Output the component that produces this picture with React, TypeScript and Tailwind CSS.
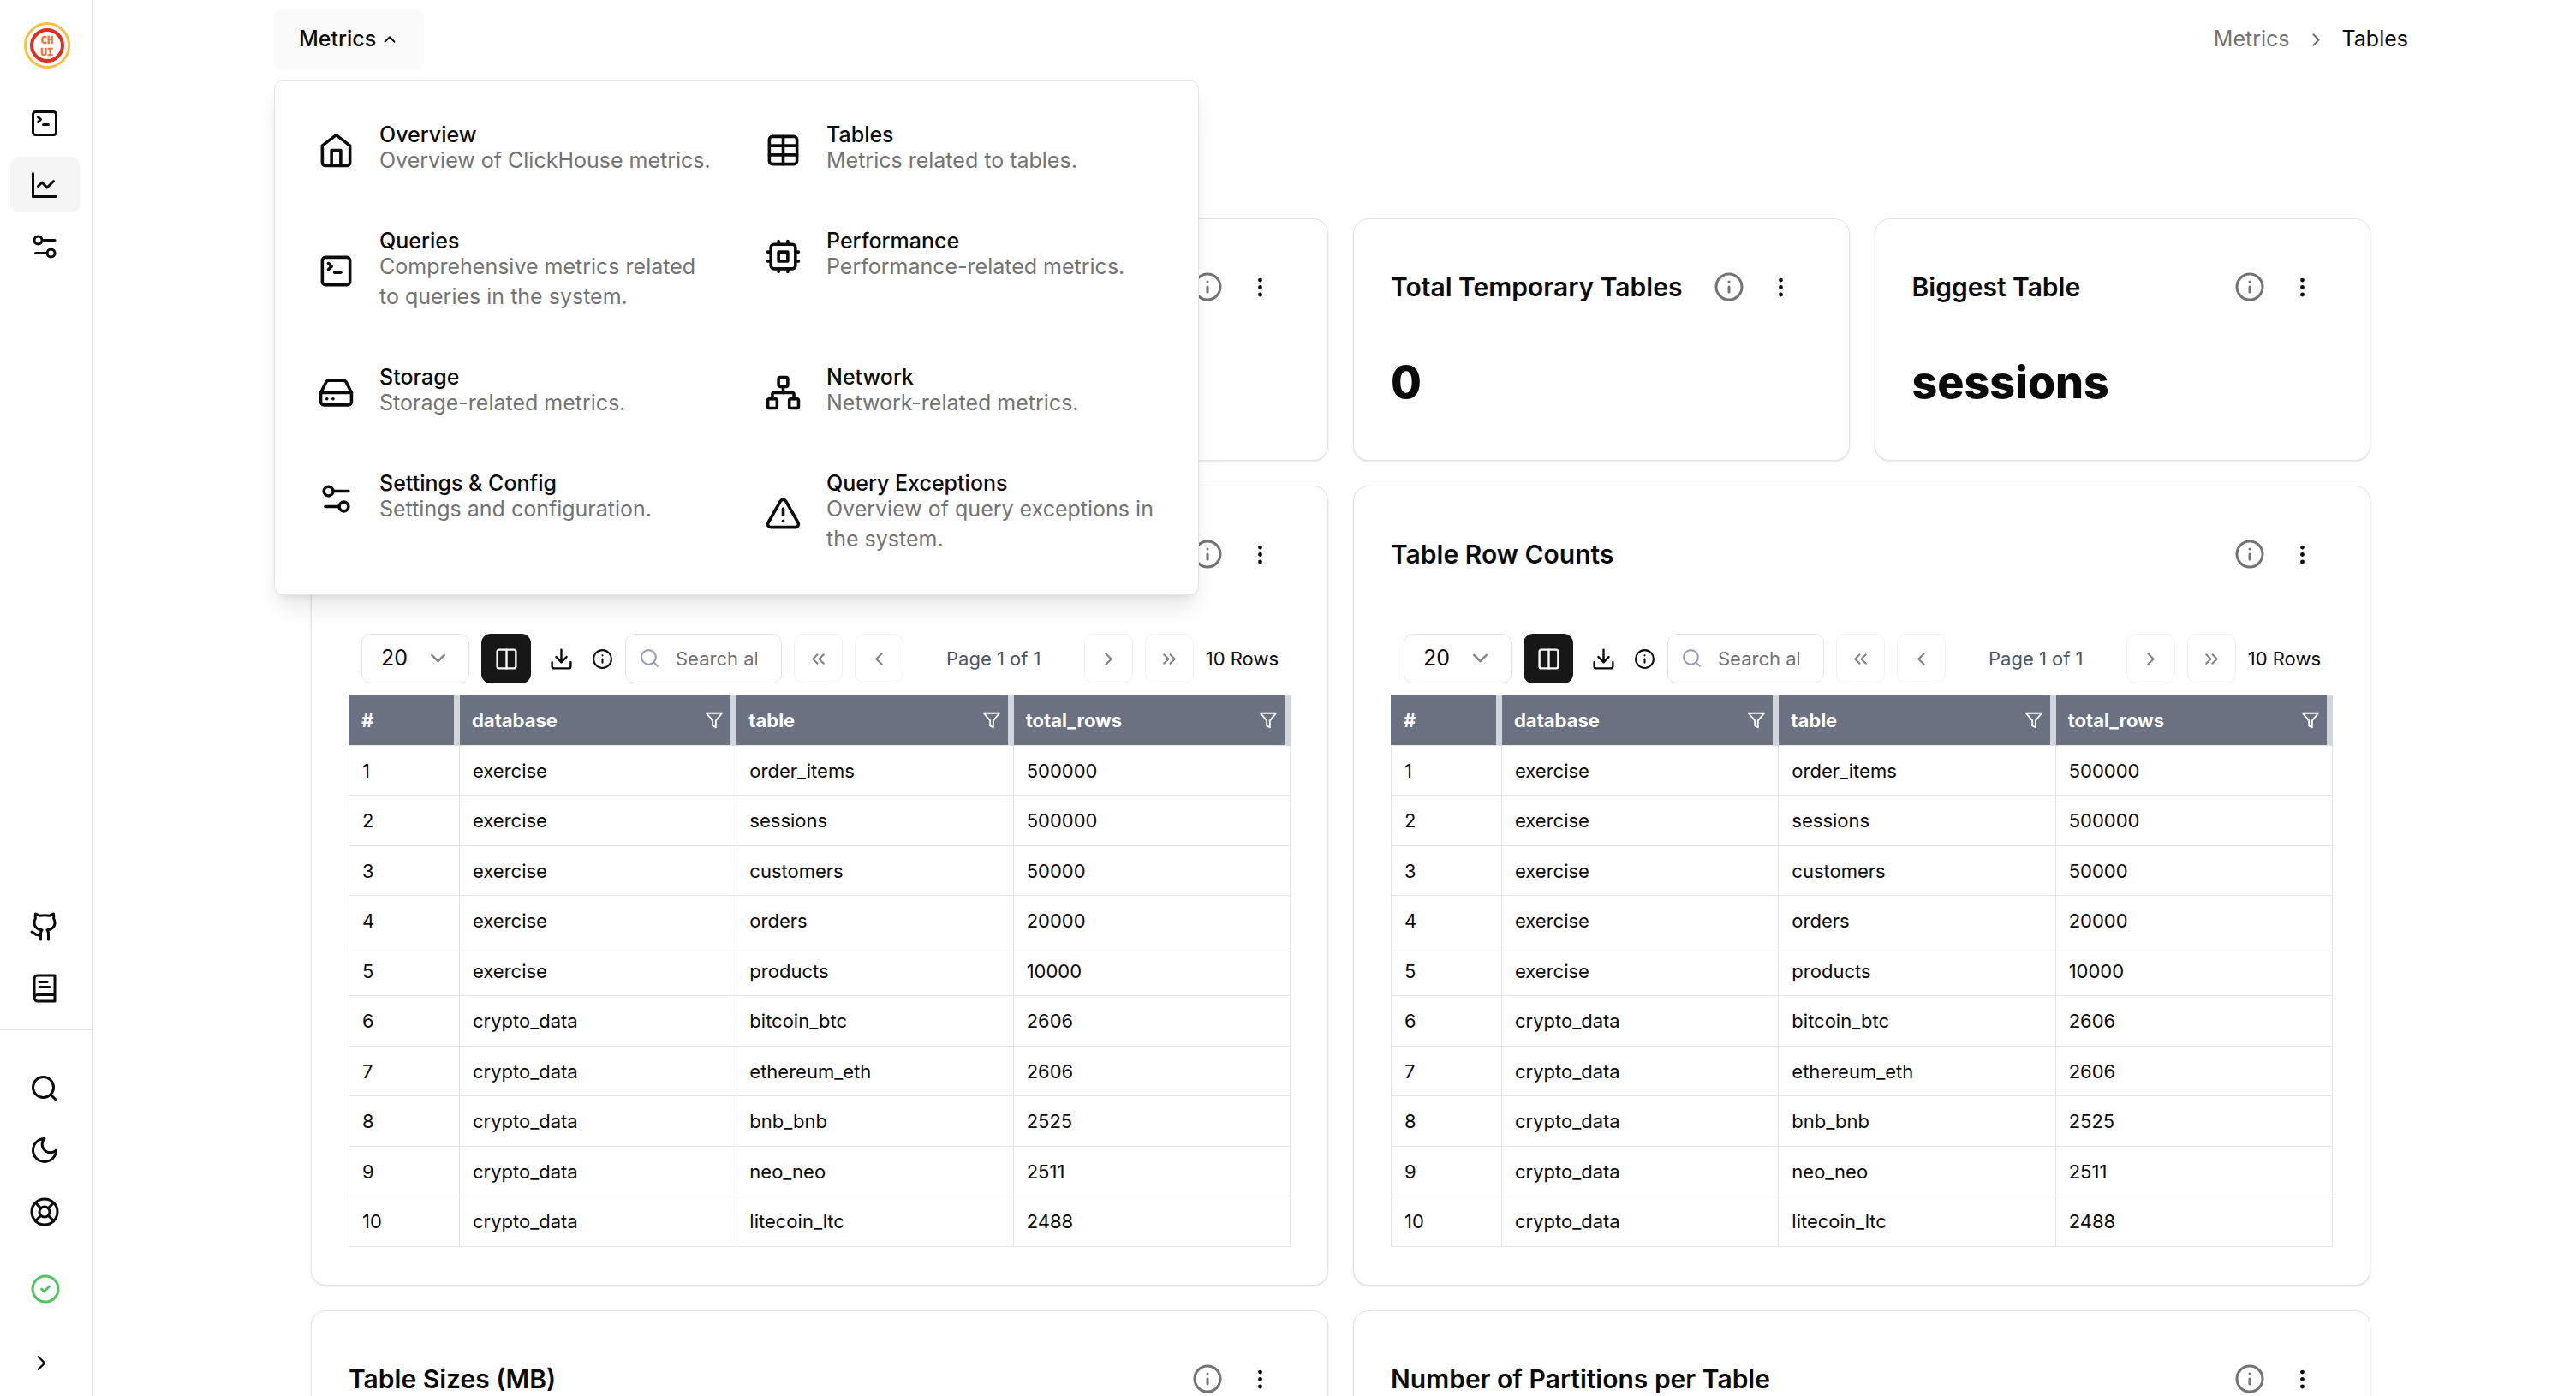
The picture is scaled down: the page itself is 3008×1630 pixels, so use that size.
import React from "react";
import {
  ChevronDown,
  ChevronLeft,
  ChevronRight,
  ChevronUp,
  ChevronsLeft,
  ChevronsRight,
  CircleCheck,
  Columns2,
  Download,
  EllipsisVertical,
  Github,
  HardDrive,
  Info,
  LifeBuoy,
  Network,
  Search,
  SquareTerminal,
  Table as TableIcon,
  TriangleAlert,
} from "lucide-react";

type IconProps = { className?: string };

function Glyph({ className, children }: { className?: string; children: React.ReactNode }) {
  return (
    <svg
      viewBox="0 0 24 24"
      fill="none"
      stroke="currentColor"
      strokeWidth={2}
      strokeLinecap="round"
      strokeLinejoin="round"
      aria-hidden="true"
      className={className}
    >
      {children}
    </svg>
  );
}

const HomeIcon = ({ className }: IconProps) => (
  <Glyph className={className}>
    <path d="m3 9 9-7 9 7v11a2 2 0 0 1-2 2H5a2 2 0 0 1-2-2z" />
    <path d="M9 22V12h6v10" />
  </Glyph>
);

const LineChartIcon = ({ className }: IconProps) => (
  <Glyph className={className}>
    <path d="M3 3v18h18" />
    <path d="m19 9-5 5-4-4-3 3" />
  </Glyph>
);

const SlidersIcon = ({ className }: IconProps) => (
  <Glyph className={className}>
    <path d="M20 7h-9" />
    <path d="M14 17H5" />
    <circle cx="17" cy="17" r="3" />
    <circle cx="7" cy="7" r="3" />
  </Glyph>
);

const BookIcon = ({ className }: IconProps) => (
  <Glyph className={className}>
    <path d="M4 19.5v-15A2.5 2.5 0 0 1 6.5 2H20v20H6.5a2.5 2.5 0 0 1 0-5H20" />
    <path d="M8 7h6" />
    <path d="M8 11h8" />
  </Glyph>
);

const MoonIcon = ({ className }: IconProps) => (
  <Glyph className={className}>
    <path d="M12 3a6 6 0 0 0 9 9 9 9 0 1 1-9-9Z" />
  </Glyph>
);

const CpuIcon = ({ className }: IconProps) => (
  <Glyph className={className}>
    <rect x="4" y="4" width="16" height="16" rx="2" />
    <rect x="9" y="9" width="6" height="6" />
    <path d="M15 2v2M15 20v2M2 15h2M2 9h2M20 15h2M20 9h2M9 2v2M9 20v2" />
  </Glyph>
);

const FunnelIcon = ({ className }: IconProps) => (
  <Glyph className={className}>
    <path d="M22 3H2l8 9.46V19l4 2v-8.54L22 3z" />
  </Glyph>
);

function Logo() {
  return (
    <svg viewBox="0 0 54 54" className="size-[54px]" role="img" aria-label="CH UI">
      <circle cx="27" cy="27" r="25.5" fill="none" stroke="#f7bf45" strokeWidth="3" />
      <circle cx="27" cy="27" r="18" fill="none" stroke="#dc3024" strokeWidth="4" />
      <g
        fontFamily="'DejaVu Sans Mono', monospace"
        fontWeight="700"
        fontSize="12.5"
        textAnchor="middle"
        fill="#ec7434"
        stroke="#ec7434"
        strokeWidth="0.5"
      >
        <text x="27" y="25">
          CH
        </text>
        <text x="27" y="39">
          UI
        </text>
      </g>
    </svg>
  );
}

type Item = { label: string; icon: React.ComponentType<IconProps>; active?: boolean };

function SideButton({ label, icon: Icon, active }: Item) {
  return (
    <button
      type="button"
      aria-label={label}
      className={
        active
          ? "flex h-[65px] items-center rounded-[11px] bg-neutral-100 pl-[22px]"
          : "flex h-[65px] items-center rounded-[11px] pl-[22px]"
      }
    >
      <Icon className="size-[36px]" />
    </button>
  );
}

function Sidebar() {
  return (
    <aside className="flex h-screen w-[109px] shrink-0 flex-col border-r border-neutral-200 pt-[26px] pb-[3px]">
      <div className="flex justify-center pl-[2px]">
        <Logo />
      </div>
      <nav aria-label="Main" className="mt-[31px] mr-[14px] ml-[12px] flex flex-col gap-[7px]">
        <SideButton label="SQL workspace" icon={SquareTerminal} />
        <SideButton label="Metrics" icon={LineChartIcon} active />
        <SideButton label="Settings" icon={SlidersIcon} />
      </nav>
      <div className="mt-auto mr-[14px] ml-[12px] flex flex-col gap-[7px] pb-[15px]">
        <SideButton label="GitHub" icon={Github} />
        <SideButton label="Documentation" icon={BookIcon} />
      </div>
      <div className="border-t-2 border-neutral-200 pt-[35px]">
        <div className="mr-[14px] ml-[12px] flex flex-col gap-[7px]">
          <SideButton label="Search" icon={Search} />
          <SideButton label="Dark mode" icon={MoonIcon} />
          <SideButton label="Help" icon={LifeBuoy} />
        </div>
      </div>
      <div className="mt-[40px] flex justify-center pr-[2px]">
        <CircleCheck className="size-[36px] text-[#54c266]" />
      </div>
      <button
        type="button"
        aria-label="Expand sidebar"
        className="mt-[32px] flex h-[72px] items-center justify-center pr-[11px]"
      >
        <ChevronRight className="size-[29px]" />
      </button>
    </aside>
  );
}

const menuItems: { title: string; text: string; icon: React.ComponentType<IconProps> }[] = [
  { title: "Overview", text: "Overview of ClickHouse metrics.", icon: HomeIcon },
  { title: "Tables", text: "Metrics related to tables.", icon: TableIcon },
  {
    title: "Queries",
    text: "Comprehensive metrics related to queries in the system.",
    icon: SquareTerminal,
  },
  { title: "Performance", text: "Performance-related metrics.", icon: CpuIcon },
  { title: "Storage", text: "Storage-related metrics.", icon: HardDrive },
  { title: "Network", text: "Network-related metrics.", icon: Network },
  { title: "Settings & Config", text: "Settings and configuration.", icon: SlidersIcon },
  {
    title: "Query Exceptions",
    text: "Overview of query exceptions in the system.",
    icon: TriangleAlert,
  },
];

function MetricsMenu() {
  return (
    <ul className="absolute top-full left-0 z-10 mt-[11px] grid w-[1080px] grid-cols-2 gap-x-[22px] gap-y-[21px] rounded-[11px] border border-neutral-200 bg-white px-[28px] pt-[29px] pb-[26px] shadow-[0_18px_27px_-5px_rgb(0_0_0/0.1),0_7px_11px_-7px_rgb(0_0_0/0.1)]">
      {menuItems.map(({ title, text, icon: Icon }) => (
        <li key={title}>
          <a
            href={"#" + title}
            className="flex items-center gap-[29px] pt-[22px] pr-[16px] pb-[21px] pl-[22px]"
          >
            <Icon className="size-[43px] shrink-0" />
            <span className="flex flex-col">
              <span className="text-[25px] leading-[25px] font-medium">{title}</span>
              <span className="text-[25px] leading-[35px] text-neutral-500">{text}</span>
            </span>
          </a>
        </li>
      ))}
    </ul>
  );
}

function TopBar() {
  return (
    <header className="flex items-center justify-between pt-[10px]">
      <div className="relative">
        <button
          type="button"
          aria-expanded="true"
          className="flex h-[72px] items-center gap-[5px] rounded-[11px] bg-neutral-50 px-[29px] text-[25px] font-medium"
        >
          Metrics
          <ChevronUp className="size-[22px]" />
        </button>
        <MetricsMenu />
      </div>
      <nav aria-label="Breadcrumb">
        <ol className="flex items-center gap-[18px] text-[25px]">
          <li>
            <a href="#metrics" className="text-neutral-500">
              Metrics
            </a>
          </li>
          <li aria-hidden="true">
            <ChevronRight className="size-[25px] text-neutral-500" />
          </li>
          <li aria-current="page">Tables</li>
        </ol>
      </nav>
    </header>
  );
}

function Card({
  title,
  wide,
  children,
}: {
  title?: string;
  wide?: boolean;
  children?: React.ReactNode;
}) {
  return (
    <section
      className={
        wide
          ? "col-span-2 min-h-[283px] min-w-0 rounded-[18px] border border-neutral-200 bg-white shadow-sm"
          : "min-h-[283px] min-w-0 rounded-[18px] border border-neutral-200 bg-white shadow-sm"
      }
    >
      <div className="flex items-center justify-between p-[43px]">
        <h2 className="text-[30px] leading-[32px] font-semibold whitespace-nowrap">{title}</h2>
        <div className="flex items-center gap-[7px]">
          <button type="button" aria-label="About this metric" className="text-neutral-500">
            <Info className="size-[36px]" />
          </button>
          <button
            type="button"
            aria-label="Options"
            className="flex size-[72px] items-center justify-center"
          >
            <EllipsisVertical className="size-[29px]" />
          </button>
        </div>
      </div>
      {children}
    </section>
  );
}

function Stat({ value }: { value: string }) {
  return <p className="px-[43px] text-[52px] leading-[66px] font-extrabold">{value}</p>;
}

const columns = ["database", "table", "total_rows"];

const rows = [
  ["exercise", "order_items", "500000"],
  ["exercise", "sessions", "500000"],
  ["exercise", "customers", "50000"],
  ["exercise", "orders", "20000"],
  ["exercise", "products", "10000"],
  ["crypto_data", "bitcoin_btc", "2606"],
  ["crypto_data", "ethereum_eth", "2606"],
  ["crypto_data", "bnb_bnb", "2525"],
  ["crypto_data", "neo_neo", "2511"],
  ["crypto_data", "litecoin_ltc", "2488"],
];

function PageButton({ label, icon: Icon }: Item) {
  return (
    <button
      type="button"
      disabled
      aria-label={label}
      className="flex h-[58px] w-[57px] shrink-0 items-center justify-center rounded-[11px] border border-neutral-200 opacity-50"
    >
      <Icon className="size-[25px]" />
    </button>
  );
}

function Toolbar() {
  return (
    <div className="flex items-center gap-[14px] p-[14px] pl-[15px] text-[22px]">
      <div className="relative shrink-0">
        <select
          aria-label="Rows per page"
          defaultValue="20"
          className="h-[58px] w-[126px] appearance-none rounded-[11px] border border-neutral-200 bg-white pl-[22px] text-[25px]"
        >
          <option value="20">20</option>
          <option value="50">50</option>
        </select>
        <ChevronDown className="pointer-events-none absolute top-[14px] right-[22px] size-[29px] opacity-50" />
      </div>
      <button
        type="button"
        aria-label="Columns"
        className="flex size-[58px] shrink-0 items-center justify-center rounded-[11px] bg-neutral-900 text-neutral-50"
      >
        <Columns2 className="size-[29px]" />
      </button>
      <button type="button" aria-label="Download" className="shrink-0 px-[7px]">
        <Download className="size-[29px]" />
      </button>
      <button type="button" aria-label="Query information" className="shrink-0">
        <Info className="size-[25px]" />
      </button>
      <div className="relative min-w-0 flex-1">
        <Search className="pointer-events-none absolute top-[16px] left-[16px] size-[25px] text-gray-400" />
        <input
          type="text"
          aria-label="Search all columns"
          placeholder="Search all columns..."
          className="h-[58px] w-full rounded-[11px] border border-neutral-200 pr-[28px] pl-[58px] placeholder:text-neutral-500"
        />
      </div>
      <PageButton label="First page" icon={ChevronsLeft} />
      <PageButton label="Previous page" icon={ChevronLeft} />
      <span className="min-w-0 flex-1 text-center whitespace-nowrap text-gray-600">
        Page 1 of 1
      </span>
      <PageButton label="Next page" icon={ChevronRight} />
      <PageButton label="Last page" icon={ChevronsRight} />
      <span className="whitespace-nowrap">10 Rows</span>
    </div>
  );
}

function RowCounts() {
  return (
    <div className="px-[43px] pb-[44px]">
      <Toolbar />
      <table className="w-full table-fixed border-separate border-spacing-0 text-left text-[22px] leading-[32px]">
        <thead>
          <tr className="h-[59px] text-white">
            <th className="w-[130px] border-r-[7px] border-b border-r-gray-300 border-b-neutral-200 bg-gray-500 pl-[15px] font-bold">
              #
            </th>
            {columns.map((name) => (
              <th
                key={name}
                className="border-r-[7px] border-b border-r-gray-300 border-b-neutral-200 bg-gray-500 pr-[8px] pl-[14px] font-bold"
              >
                <span className="flex items-center justify-between">
                  {name}
                  <button type="button" aria-label={"Filter " + name}>
                    <FunnelIcon className="size-[22px]" />
                  </button>
                </span>
              </th>
            ))}
          </tr>
        </thead>
        <tbody>
          {rows.map((row, i) => (
            <tr key={row[1]} className="odd:h-[58px] even:h-[59px]">
              <td className="border-r border-b border-l border-neutral-200 pl-[15px]">{i + 1}</td>
              {row.map((cell, j) => (
                <td key={j} className="border-r border-b border-neutral-200 pl-[15px]">
                  {cell}
                </td>
              ))}
            </tr>
          ))}
        </tbody>
      </table>
    </div>
  );
}

export default function App() {
  return (
    <div className="flex h-screen overflow-hidden bg-white font-['Inter','Liberation_Sans',sans-serif] text-neutral-950">
      <Sidebar />
      <main className="min-w-0 flex-1 overflow-hidden pl-[15px]">
        <div className="mx-auto max-w-[2520px] px-[14px]">
          <TopBar />
          <div className="mt-[173px] grid grid-cols-4 gap-[29px] pr-[44px] pl-[43px]">
            <Card />
            <Card />
            <Card title="Total Temporary Tables">
              <Stat value="0" />
            </Card>
            <Card title="Biggest Table">
              <Stat value="sessions" />
            </Card>
            <Card wide>
              <RowCounts />
            </Card>
            <Card wide title="Table Row Counts">
              <RowCounts />
            </Card>
            <Card wide title="Table Sizes (MB)" />
            <Card wide title="Number of Partitions per Table" />
          </div>
        </div>
      </main>
    </div>
  );
}
